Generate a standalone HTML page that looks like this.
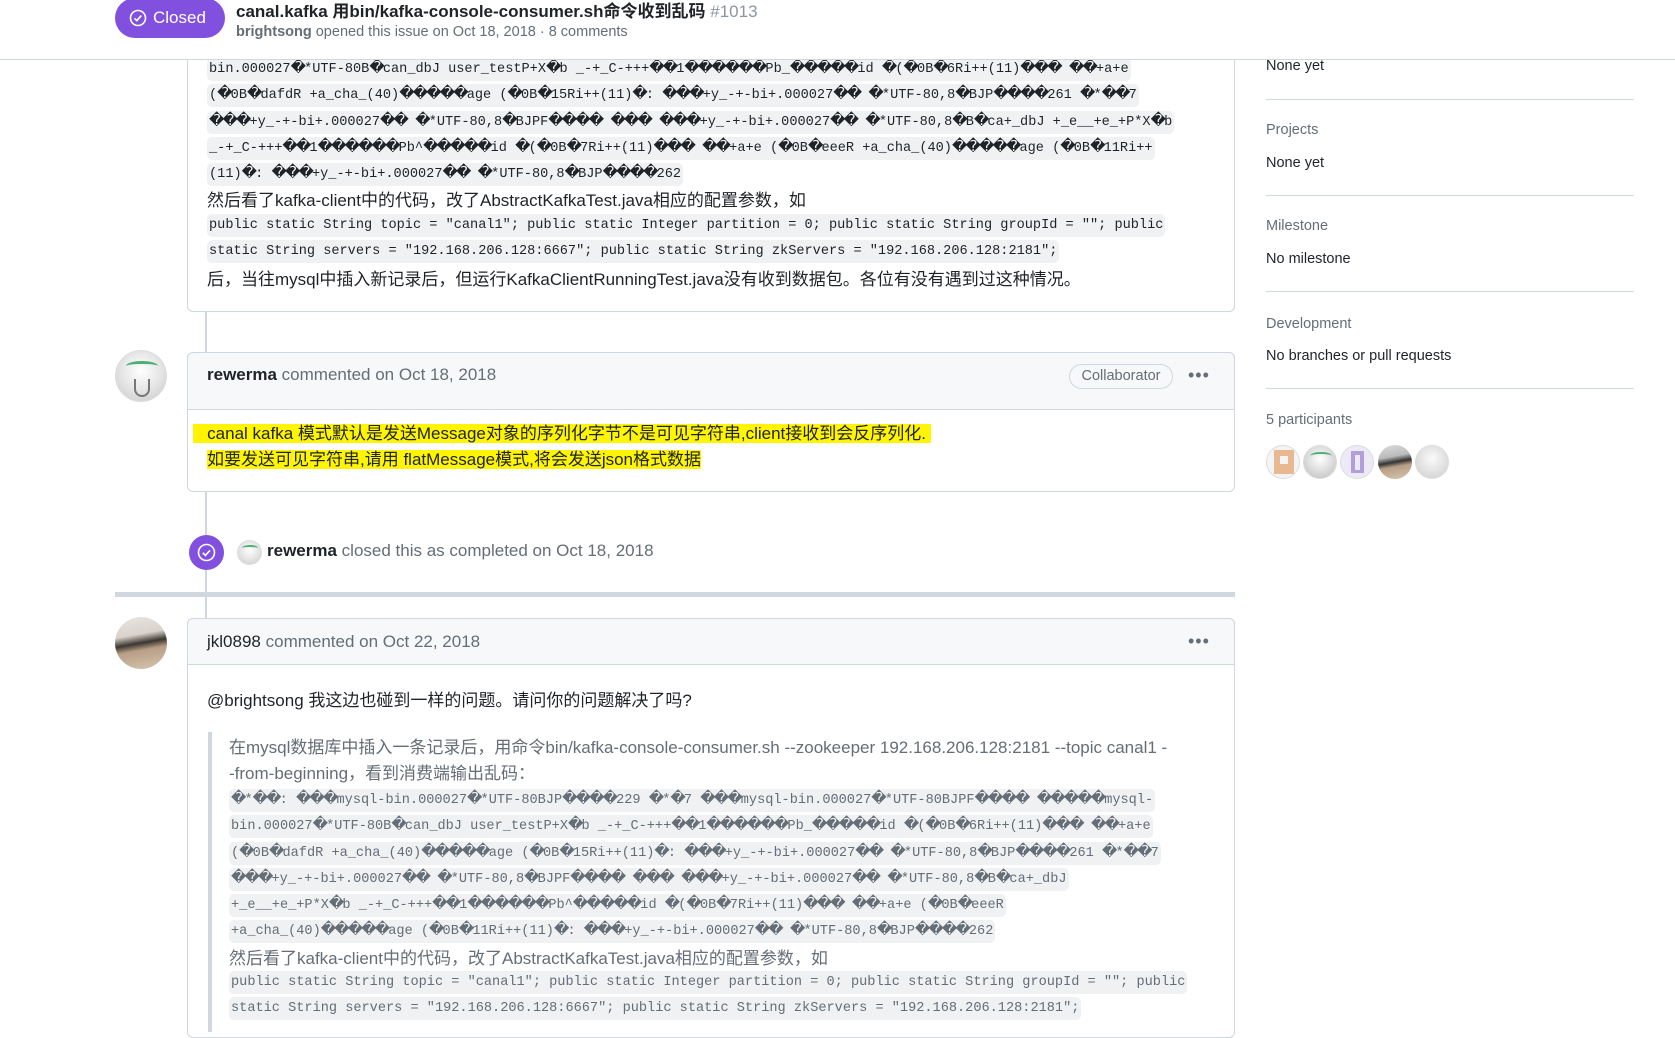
<!DOCTYPE html>
<html><head><meta charset="utf-8"><style>
*{margin:0;padding:0;box-sizing:border-box}
body{width:1675px;height:1026px;overflow:hidden;background:#fff;position:relative;font-family:"Liberation Sans","Noto Sans CJK SC",sans-serif;color:#1f2328}
.abs{position:absolute}
.hdr{left:0;top:0;width:1675px;height:60px;border-bottom:1px solid #d0d7de;background:#fff;z-index:5}
.badge{left:115px;top:-2px;width:110px;height:40px;border-radius:20px;background:#8250df;color:#fff;font-size:17px;line-height:40px;padding-left:38px}
.badge svg{position:absolute;left:14px;top:11px}
.title{left:236px;top:-3px;font-size:17px;white-space:nowrap;font-weight:bold}
.title span{color:#8c959f;font-weight:normal}
.sub{left:236px;top:24px;font-size:14.5px;color:#656d76;white-space:nowrap}
.sub b{color:#656d76}
.tl{left:205px;width:2px;background:#d0d7de}
.box{left:187px;width:1048px;border:1px solid #d0d7de;border-radius:6px;background:#fff}
.chead{left:187px;width:1048px;background:#f6f8fa;border:1px solid #d0d7de;border-radius:6px 6px 0 0}
.code{font-family:"Liberation Mono","DejaVu Sans Mono",monospace;font-size:13.6px;white-space:nowrap;color:#1f2328}
.code span{background:#eff1f3;padding:4px 2px;border-radius:5px}
.code i{font-style:normal;display:inline-block;width:13.5px;text-align:center;font-family:"DejaVu Sans",sans-serif;font-size:15px;line-height:1}
.ln{position:absolute;white-space:nowrap}
.zh{font-size:17px;white-space:nowrap}
.av{border-radius:50%;position:absolute;overflow:hidden}
.side{left:1266px;font-size:14.5px;white-space:nowrap}
.sh{color:#656d76}
.hr{left:1266px;width:368px;height:1px;background:#d0d7de}
.dots{font-size:18px;color:#656d76;letter-spacing:1px}
.hl{background:#fff500}
</style></head><body>

<div class="abs hdr">
 <div class="abs badge"><svg width="18" height="18" viewBox="0 0 18 18"><circle cx="9" cy="9" r="7.5" fill="none" stroke="#fff" stroke-width="1.6"/><path d="M5.5 9.3l2.3 2.3 4.5-5" fill="none" stroke="#fff" stroke-width="1.7"/></svg>Closed</div>
 <div class="abs title">canal.kafka 用bin/kafka-console-consumer.sh命令收到乱码 <span>#1013</span></div>
 <div class="abs sub"><b>brightsong</b> opened this issue on Oct 18, 2018 · 8 comments</div>
</div>

<div class="abs tl" style="top:60px;height:966px"></div>

<div class="abs box" style="top:40px;height:272px;border-top:none;border-radius:0 0 6px 6px"></div>
<div class="code">
 <div class="ln" style="left:207px;top:60px"><span>bin.000027�*UTF-80B�can_dbJ user_testP+X�b _-+_C-+++��1������Pb_�����id �(�0B�6Ri++(11)��� ��+a+e</span></div>
 <div class="ln" style="left:207px;top:86px"><span>(�0B�dafdR +a_cha_(40)�����age (�0B�15Ri++(11)�: ���+y_-+-bi+.000027�� �*UTF-80,8�BJP����261 �*��7</span></div>
 <div class="ln" style="left:207px;top:113px"><span>���+y_-+-bi+.000027�� �*UTF-80,8�BJPF���� ��� ���+y_-+-bi+.000027�� �*UTF-80,8�B�ca+_dbJ +_e__+e_+P*X�b</span></div>
 <div class="ln" style="left:207px;top:139px"><span>_-+_C-+++��1������Pb^�����id �(�0B�7Ri++(11)��� ��+a+e (�0B�eeeR +a_cha_(40)�����age (�0B�11Ri++</span></div>
 <div class="ln" style="left:207px;top:165px"><span>(11)�: ���+y_-+-bi+.000027�� �*UTF-80,8�BJP����262</span></div>
 <div class="ln" style="left:207px;top:218px"><span> public static String topic = "canal1"; public static Integer partition = 0; public static String groupId = ""; public</span></div>
 <div class="ln" style="left:207px;top:244px"><span>static String servers = "192.168.206.128:6667"; public static String zkServers = "192.168.206.128:2181";</span></div>
</div>
<div class="abs zh" style="left:207px;top:186px">然后看了kafka-client中的代码，改了AbstractKafkaTest.java相应的配置参数，如</div>
<div class="abs zh" style="left:207px;top:265px">后，当往mysql中插入新记录后，但运行KafkaClientRunningTest.java没有收到数据包。各位有没有遇到过这种情况。</div>

<div class="av" style="left:115px;top:350px;width:52px;height:52px;background:radial-gradient(circle at 50% 40%,#fff 0,#e8e8e8 45%,#c8c8c8 100%);border:1px solid #ddd"><div style="position:absolute;left:10px;top:10px;width:32px;height:10px;border-top:3px solid #4caf75;border-radius:50%"></div><div style="position:absolute;left:18px;top:28px;width:16px;height:18px;border:2px solid #777;border-top:none;border-radius:0 0 8px 8px"></div></div>
<div class="abs box" style="top:352px;height:140px"></div>
<div class="abs chead" style="top:352px;height:58px"></div>
<div class="abs" style="left:207px;top:365px;font-size:17px;white-space:nowrap"><b>rewerma</b> <span style="color:#656d76">commented on Oct 18, 2018</span></div>
<div class="abs" style="left:1069px;top:364px;width:104px;height:25px;border:1px solid #d0d7de;border-radius:13px;font-size:14.5px;color:#656d76;text-align:center;line-height:23px">Collaborator</div>
<div class="abs dots" style="left:1188px;top:365px">•••</div>
<div class="abs zh" style="left:193px;top:419px"><span class="hl">&nbsp;&nbsp;&nbsp;canal kafka 模式默认是发送Message对象的序列化字节不是可见字符串,client接收到会反序列化.&nbsp;</span></div>
<div class="abs zh" style="left:207px;top:445px"><span class="hl">如要发送可见字符串,请用 flatMessage模式,将会发送json格式数据</span></div>

<div class="abs" style="left:189px;top:535px;width:35px;height:35px;border-radius:50%;background:#8250df"><svg width="35" height="35" viewBox="0 0 35 35"><circle cx="17.5" cy="17.5" r="8" fill="none" stroke="#fff" stroke-width="1.6"/><path d="M13.8 17.8l2.6 2.6 4.6-5" fill="none" stroke="#fff" stroke-width="1.7"/></svg></div>
<div class="av" style="left:237px;top:540px;width:25px;height:25px;background:radial-gradient(circle at 50% 40%,#fff,#ccc);border:1px solid #ddd"><div style="position:absolute;left:4px;top:4px;width:16px;height:6px;border-top:2px solid #4caf75;border-radius:50%"></div></div>
<div class="abs" style="left:267px;top:541px;font-size:17px;white-space:nowrap"><b>rewerma</b> <span style="color:#656d76">closed this as completed on Oct 18, 2018</span></div>
<div class="abs" style="left:115px;top:592px;width:1120px;height:5px;background:#d0d7de"></div>

<div class="av" style="left:115px;top:617px;width:52px;height:52px;background:linear-gradient(170deg,#e9e6e2 0,#d8d2cb 35%,#3b3530 50%,#b89e86 62%,#d8c6b0 100%)"></div>
<div class="abs box" style="top:618px;height:420px"></div>
<div class="abs chead" style="top:618px;height:47px"></div>
<div class="abs" style="left:207px;top:632px;font-size:17px;white-space:nowrap"><span>jkl0898</span> <span style="color:#656d76">commented on Oct 22, 2018</span></div>
<div class="abs dots" style="left:1188px;top:631px">•••</div>
<div class="abs zh" style="left:207px;top:686px">@brightsong 我这边也碰到一样的问题。请问你的问题解决了吗?</div>
<div class="abs" style="left:208px;top:732px;width:4px;height:300px;background:#d0d7de"></div>
<div class="abs zh" style="left:229px;top:733px;color:#656d76">在mysql数据库中插入一条记录后，用命令bin/kafka-console-consumer.sh --zookeeper 192.168.206.128:2181 --topic canal1 -</div>
<div class="abs zh" style="left:229px;top:759px;color:#656d76">-from-beginning，看到消费端输出乱码：</div>
<div class="code" style="color:#656d76">
 <div class="ln" style="left:229px;top:791px"><span> �*��: ���mysql-bin.000027�*UTF-80BJP����229 �*�7 ���mysql-bin.000027�*UTF-80BJPF���� �����mysql-</span></div>
 <div class="ln" style="left:229px;top:817px"><span>bin.000027�*UTF-80B�can_dbJ user_testP+X�b _-+_C-+++��1������Pb_�����id �(�0B�6Ri++(11)��� ��+a+e</span></div>
 <div class="ln" style="left:229px;top:844px"><span>(�0B�dafdR +a_cha_(40)�����age (�0B�15Ri++(11)�: ���+y_-+-bi+.000027�� �*UTF-80,8�BJP����261 �*��7</span></div>
 <div class="ln" style="left:229px;top:870px"><span>���+y_-+-bi+.000027�� �*UTF-80,8�BJPF���� ��� ���+y_-+-bi+.000027�� �*UTF-80,8�B�ca+_dbJ</span></div>
 <div class="ln" style="left:229px;top:896px"><span>+_e__+e_+P*X�b _-+_C-+++��1������Pb^�����id �(�0B�7Ri++(11)��� ��+a+e (�0B�eeeR</span></div>
 <div class="ln" style="left:229px;top:922px"><span>+a_cha_(40)�����age (�0B�11Ri++(11)�: ���+y_-+-bi+.000027�� �*UTF-80,8�BJP����262</span></div>
 <div class="ln" style="left:229px;top:975px"><span> public static String topic = "canal1"; public static Integer partition = 0; public static String groupId = ""; public</span></div>
 <div class="ln" style="left:229px;top:1001px"><span>static String servers = "192.168.206.128:6667"; public static String zkServers = "192.168.206.128:2181";</span></div>
</div>
<div class="abs zh" style="left:229px;top:944px;color:#656d76">然后看了kafka-client中的代码，改了AbstractKafkaTest.java相应的配置参数，如</div>

<div class="abs side" style="top:58px">None yet</div>
<div class="abs hr" style="top:99px"></div>
<div class="abs side sh" style="top:122px">Projects</div>
<div class="abs side" style="top:155px">None yet</div>
<div class="abs hr" style="top:195px"></div>
<div class="abs side sh" style="top:218px">Milestone</div>
<div class="abs side" style="top:251px">No milestone</div>
<div class="abs hr" style="top:291px"></div>
<div class="abs side sh" style="top:316px">Development</div>
<div class="abs side" style="top:348px">No branches or pull requests</div>
<div class="abs hr" style="top:388px"></div>
<div class="abs side sh" style="top:412px">5 participants</div>
<div class="av" style="left:1266px;top:445px;width:34px;height:34px;background:#f4f4f4;border:1px solid #ddd"><div style="position:absolute;left:7px;top:4px;width:20px;height:24px;background:#e8b890"></div><div style="position:absolute;left:13px;top:10px;width:8px;height:8px;background:#f4f4f4"></div></div>
<div class="av" style="left:1303px;top:445px;width:34px;height:34px;background:radial-gradient(circle at 50% 40%,#fff,#bbb);border:1px solid #ddd"><div style="position:absolute;left:6px;top:6px;width:22px;height:8px;border-top:2px solid #4caf75;border-radius:50%"></div></div>
<div class="av" style="left:1340px;top:445px;width:34px;height:34px;background:#eceaf6;border:1px solid #ddd"><div style="position:absolute;left:10px;top:5px;width:13px;height:22px;background:#b39ddb"></div><div style="position:absolute;left:14px;top:9px;width:5px;height:15px;background:#eceaf6"></div></div>
<div class="av" style="left:1378px;top:445px;width:34px;height:34px;background:linear-gradient(170deg,#ddd 0,#bbb 35%,#333 50%,#b89e86 62%,#d8c6b0 100%)"></div>
<div class="av" style="left:1415px;top:445px;width:34px;height:34px;background:radial-gradient(circle at 50% 40%,#fafafa,#ccc);border:1px solid #ddd"></div>
<script>
document.querySelectorAll('.code span').forEach(function(s){s.innerHTML=s.innerHTML.replace(/\uFFFD/g,'<i>\uFFFD</i>');});
</script>
</body></html>
